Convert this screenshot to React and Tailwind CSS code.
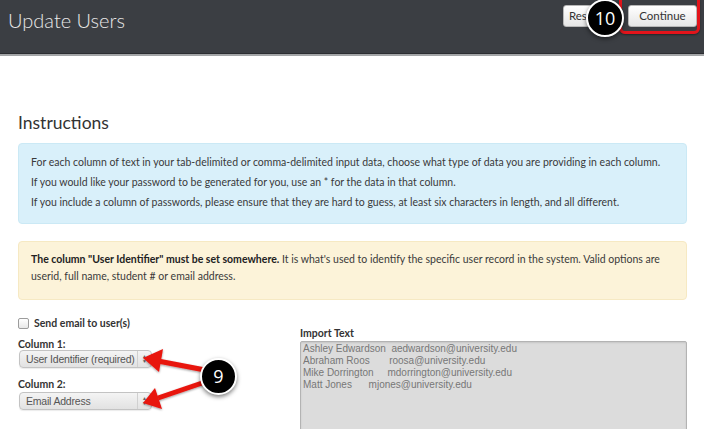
import React from 'react';

const SelectBox = ({ value }) => (
    <div className="flex h-[18px] w-[133px] items-stretch rounded-[4px] border border-[#c3c3c3] bg-gradient-to-b from-[#f4f4f4] to-[#e2e2e2] text-[10.5px] text-[#555] shadow-[0_1px_1px_rgba(0,0,0,0.08)]" style={{ fontFamily: '"Liberation Sans", Arial, sans-serif' }}>
        <div className="flex flex-1 items-center overflow-hidden whitespace-nowrap pl-[6px] leading-none tracking-[-0.2px]">{value}</div>
        <div className="flex w-[14px] flex-col items-center justify-center border-l border-[#d0d0d0] text-[5px] leading-[5px] text-[#666]">
            <span>▲</span>
            <span>▼</span>
        </div>
    </div>
);

const Badge = ({ children, className }) => (
    <div className={`absolute flex items-center justify-center rounded-full border-2 border-white bg-black text-[18px] text-white shadow-[0_2px_4px_rgba(0,0,0,0.5)] ${className}`} style={{ fontFamily: '"Open Sans", sans-serif' }}>
        {children}
    </div>
);

const App = () => {
    return (
        <div className="relative h-[429px] w-[704px] overflow-hidden bg-white" style={{ fontFamily: 'Lato, "Open Sans", sans-serif' }}>
            {/* Header */}
            <div className="flex h-[53px] items-start justify-between bg-[#3b3e43] pl-[8px] pr-[7px]">
                <h1 className="pt-[7px] text-[20px] font-light leading-[26px] text-[#e8e8e8]">Update Users</h1>
                <div className="flex items-center gap-[6px] pt-[5px]">
                    <button className="h-[22px] w-[59px] rounded-[3px] border border-[#b8b8b8] bg-gradient-to-b from-white to-[#e6e6e6] pl-[2px] text-left text-[11.5px] text-[#333]">
                        &nbsp;Reset
                    </button>
                    <button className="h-[22px] w-[69px] rounded-[3px] border border-[#b8b8b8] bg-gradient-to-b from-white to-[#e6e6e6] text-[11.5px] text-[#333]">
                        Continue
                    </button>
                </div>
            </div>
            <div className="h-px bg-[#2b2d31]"></div>
            <div className="h-[2px] bg-[#a3a5a7]"></div>

            {/* Highlight on Continue */}
            <div className="absolute left-[619px] top-[-6px] h-[40px] w-[81px] rounded-[6px] border-[3px] border-solid border-[#e3141b] shadow-[0_1px_2px_rgba(0,0,0,0.4)]"></div>
            <Badge className="left-[586px] top-[-1px] h-[38px] w-[38px]">10</Badge>

            {/* Content */}
            <div className="px-[18px] pt-[55px] pr-[17px]">
                <h2 className="text-[17.5px] leading-[24px] text-[#333]">Instructions</h2>

                <div className="mt-[8px] rounded-[4px] border border-[#cbe9f5] bg-[#d9f0fa] pb-[11px] pl-[12px] pt-[8px] text-[10.5px] leading-[20px] text-[#3a3a3a]">
                    <p>For each column of text in your tab-delimited or comma-delimited input data, choose what type of data you are providing in each column.</p>
                    <p>If you would like your password to be generated for you, use an * for the data in that column.</p>
                    <p>If you include a column of passwords, please ensure that they are hard to guess, at least six characters in length, and all different.</p>
                </div>

                <div className="mt-[17px] rounded-[4px] border border-[#f6e9c3] bg-[#fcf3d9] pb-[14px] pl-[12px] pr-[12px] pt-[9px] text-[10.5px] leading-[17px] text-[#3a3a3a]">
                    <p><span className="font-bold text-[#222]">The column "User Identifier" must be set somewhere.</span> It is what's used to identify the specific user record in the system. Valid options are userid, full name, student # or email address.</p>
                </div>

                <div className="mt-[16px] flex">
                    <div className="w-[282px]">
                        <label className="flex items-center gap-[5px] text-[10.5px] font-bold text-[#333]">
                            <span className="h-[11px] w-[11px] rounded-[2px] border border-[#9c9c9c] bg-gradient-to-b from-white to-[#e8e8e8]"></span>
                            Send email to user(s)
                        </label>
                        <div className="mt-[5px] text-[10.5px] font-bold leading-[14px] text-[#333]">Column 1:</div>
                        <div className="mt-[-1px] pl-px"><SelectBox value="User Identifier (required)" /></div>
                        <div className="mt-[9px] text-[10.5px] font-bold leading-[14px] text-[#333]">Column 2:</div>
                        <div className="mt-[1px] pl-px"><SelectBox value="Email Address" /></div>
                    </div>
                    <div className="flex-1 pt-[10px]">
                        <div className="text-[10.5px] font-bold leading-[14px] text-[#333]">Import Text</div>
                        <div className="mt-[1px] h-[120px] rounded-[2px] border border-[#b3b3b3] bg-[#dcdcdc] pl-[2px] pt-px text-[10px] leading-[12px] text-[#777] shadow-[inset_0_1px_2px_rgba(0,0,0,0.1)]" style={{ fontFamily: '"Liberation Sans", Arial, sans-serif' }}>
                            <div className="whitespace-pre">Ashley Edwardson  aedwardson@university.edu</div>
                            <div className="whitespace-pre">Abraham Roos       roosa@university.edu</div>
                            <div className="whitespace-pre">Mike Dorrington     mdorrington@university.edu</div>
                            <div className="whitespace-pre">Matt Jones      mjones@university.edu</div>
                        </div>
                    </div>
                </div>
            </div>

            {/* Arrows to selects */}
            <svg className="absolute left-0 top-0" width="704" height="429" viewBox="0 0 704 429">
                <defs>
                    <filter id="sh" x="-20%" y="-50%" width="140%" height="200%">
                        <feDropShadow dx="0" dy="1" stdDeviation="1" floodColor="#000" floodOpacity="0.4" />
                    </filter>
                </defs>
                <g filter="url(#sh)" fill="#e8140f" stroke="#e8140f">
                    <line x1="205" y1="370" x2="158" y2="361" strokeWidth="5" />
                    <polygon points="143,358 163,349 159,372" stroke="none" />
                    <line x1="205" y1="382" x2="158" y2="398" strokeWidth="5" />
                    <polygon points="143,403 155,388 162,409" stroke="none" />
                </g>
            </svg>
            <Badge className="left-[200px] top-[358px] h-[37px] w-[37px]">9</Badge>
        </div>
    );
};

export default App;
